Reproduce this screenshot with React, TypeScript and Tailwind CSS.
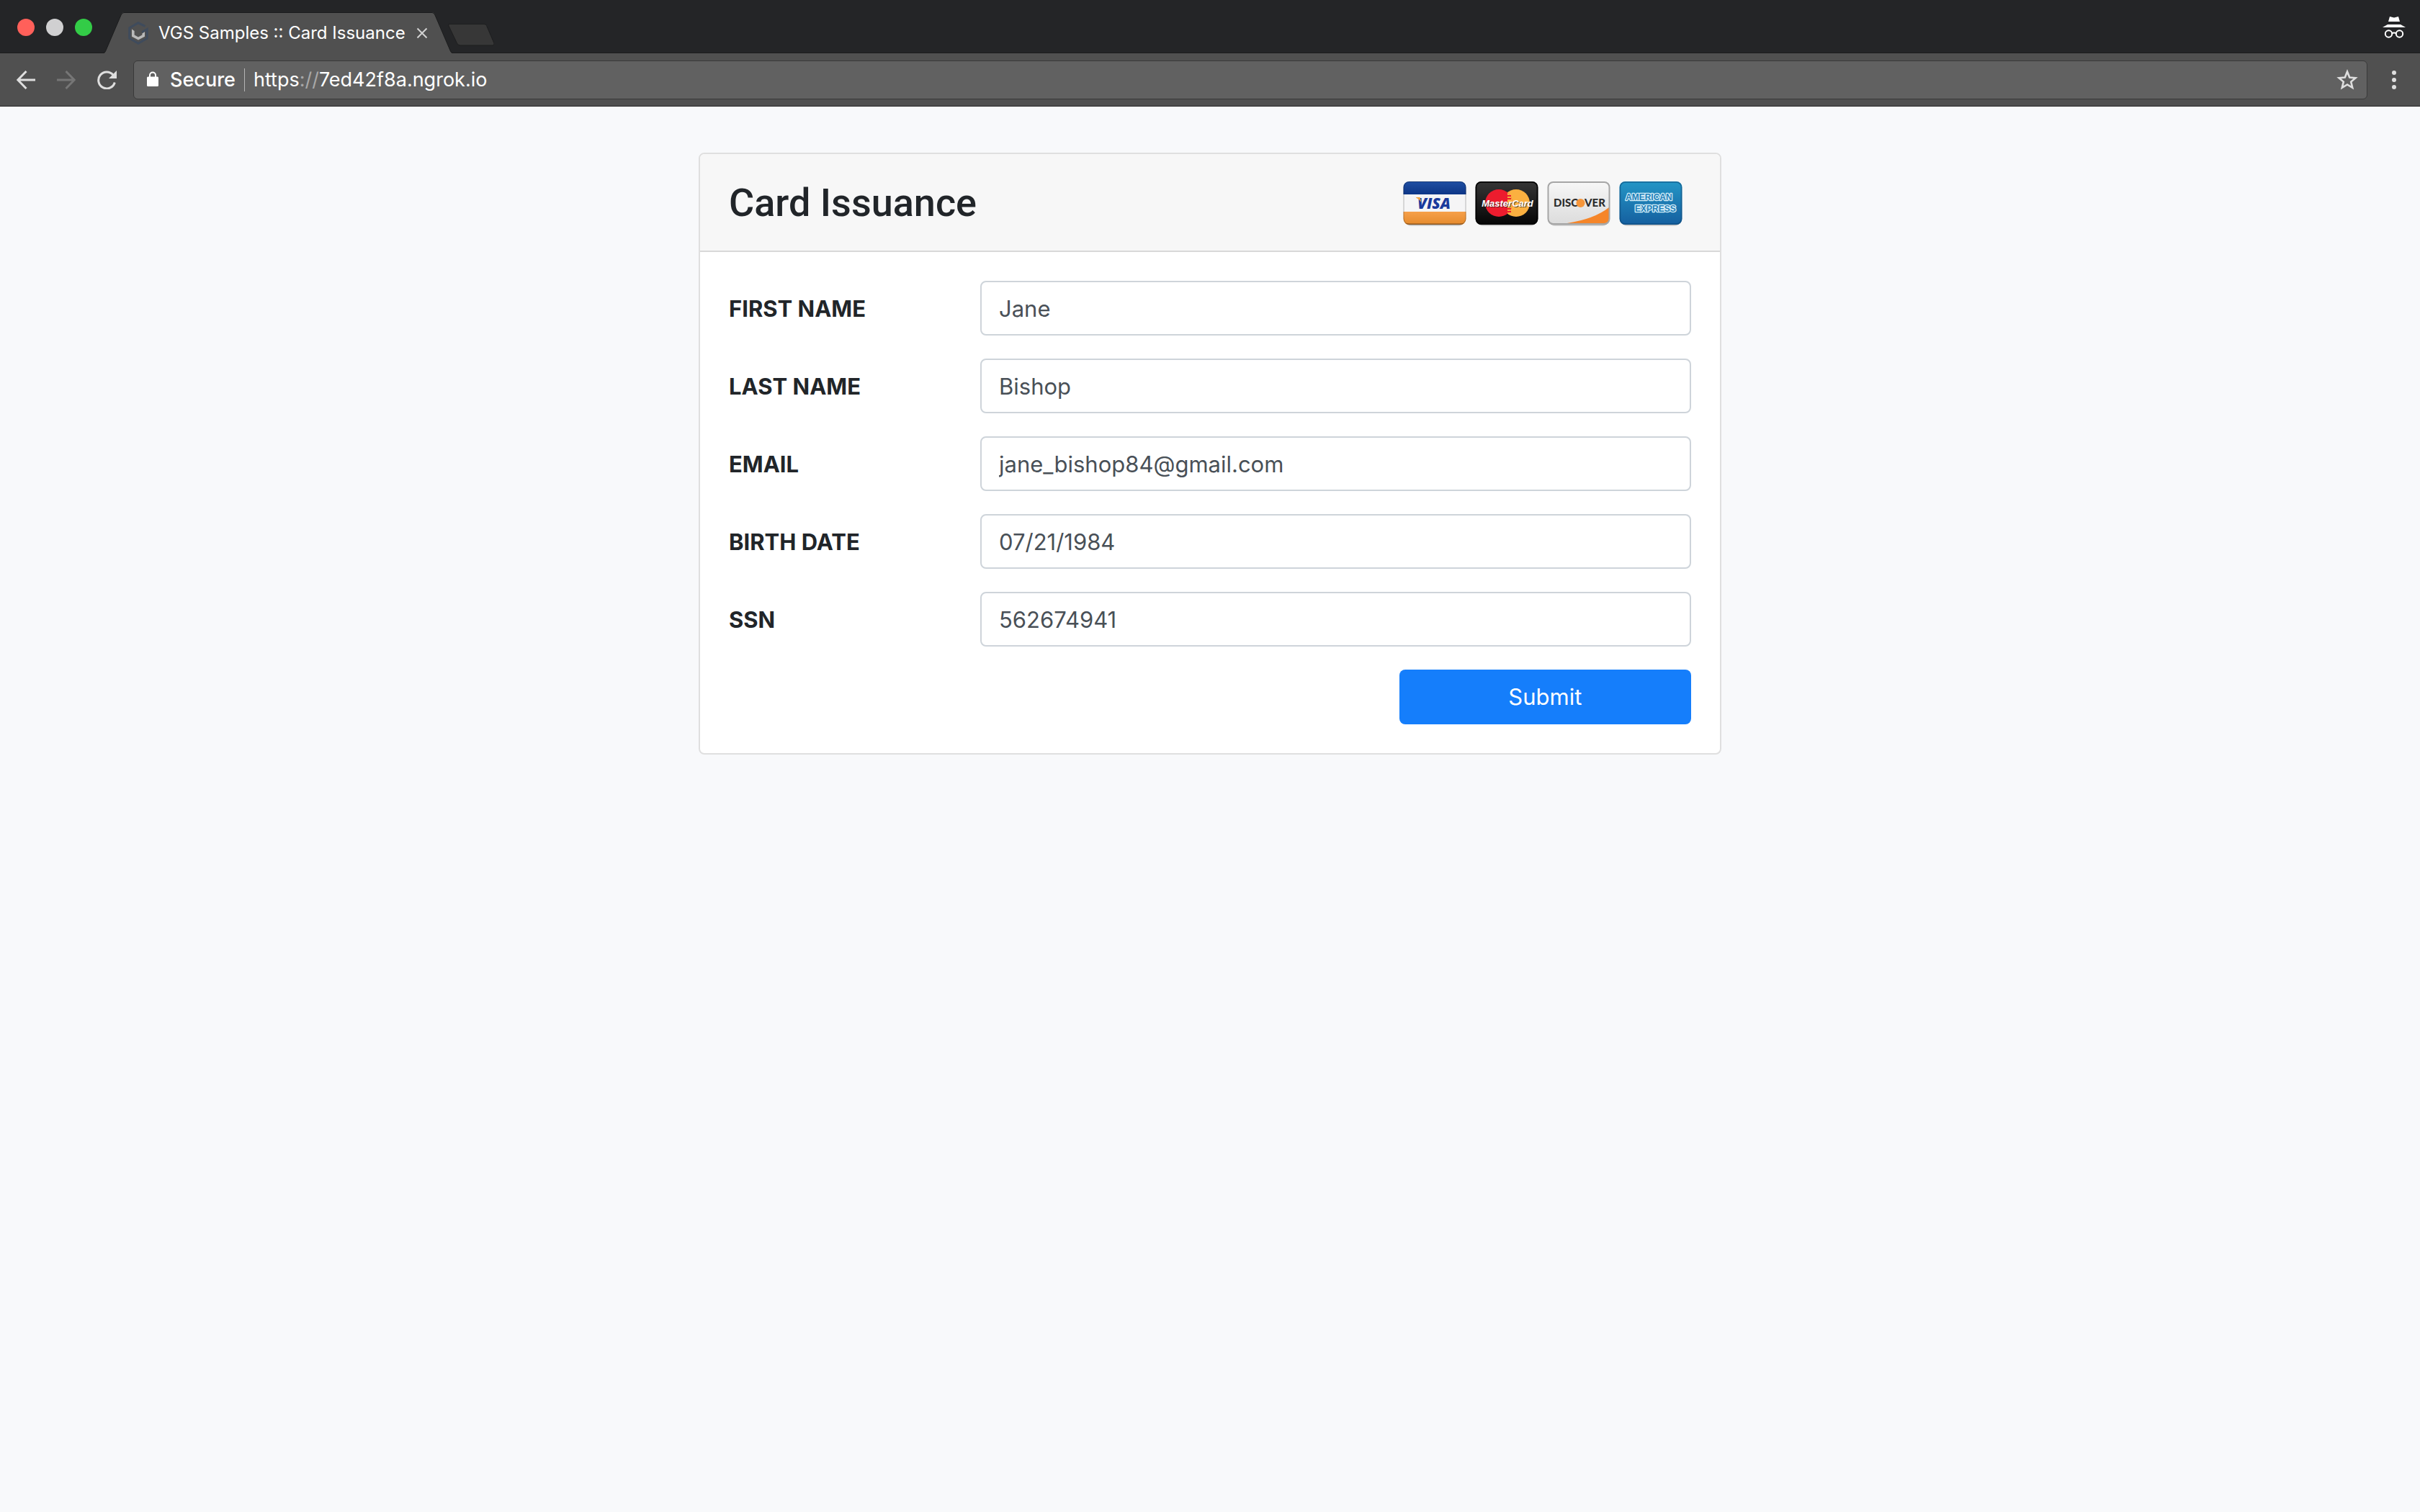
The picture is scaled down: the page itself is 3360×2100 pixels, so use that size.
import { useState } from "react";

const fields = [
  { id: "first-name", label: "FIRST NAME", value: "Jane" },
  { id: "last-name", label: "LAST NAME", value: "Bishop" },
  { id: "email", label: "EMAIL", value: "jane_bishop84@gmail.com" },
  { id: "birth-date", label: "BIRTH DATE", value: "07/21/1984" },
  { id: "ssn", label: "SSN", value: "562674941" },
];

function Favicon() {
  return (
    <svg className="h-8 w-7 shrink-0" viewBox="0 0 28 32" fill="none" aria-hidden="true">
      <path d="M23.5 6.3 L14 1.8 L1.7 8.8 V23.2 L14 30.2 L26.3 23.2 V10.6 L19 14.8" stroke="#3f4b5c" strokeWidth="3" />
      <path d="M5 10.5 L8.6 13 V18.6 L14 21.6 L19.4 18.6 V16.5 L23 14.2 V20.8 L14 25.6 L5 20.8 Z" fill="#b9b9b9" />
    </svg>
  );
}

function CardFrame({ name, children }: { name: string; children: React.ReactNode }) {
  return (
    <svg className="h-16 w-[88px] overflow-visible" viewBox="0 0 88 64" role="img" aria-label={name}>
      <rect x="3" y="8" width="82" height="56" rx="8" fill="#000" opacity="0.12" />
      <rect x="1" y="4" width="86" height="58.5" rx="8" fill="#000" opacity="0.25" />
      {children}
    </svg>
  );
}

function VisaCard() {
  return (
    <CardFrame name="Visa">
      <defs>
        <linearGradient id="visa-blue" x1="0" y1="0" x2="0" y2="1">
          <stop offset="0" stopColor="#1f4fa3" />
          <stop offset="1" stopColor="#0d3687" />
        </linearGradient>
        <linearGradient id="visa-gold" x1="0" y1="0" x2="0" y2="1">
          <stop offset="0" stopColor="#f6a04a" />
          <stop offset="1" stopColor="#e58a2c" />
        </linearGradient>
        <clipPath id="visa-clip">
          <rect x="0.5" y="2" width="87" height="60" rx="8" />
        </clipPath>
      </defs>
      <g clipPath="url(#visa-clip)">
        <rect y="2" width="88" height="60" fill="#f5f5f6" />
        <rect y="2" width="88" height="18" fill="url(#visa-blue)" />
        <rect y="44" width="88" height="18" fill="url(#visa-gold)" />
        <rect y="60" width="88" height="2" fill="#b9722a" />
      </g>
      <rect x="1" y="2.5" width="86" height="59" rx="8" fill="none" stroke="#000" strokeOpacity="0.25" />
      <text x="43" y="39.5" textAnchor="middle" fontFamily="Open Sans, sans-serif" fontWeight="800" fontStyle="italic" fontSize="21" fill="#1a3a9c">VISA</text>
      <path d="M18 24 H23.5 L25.6 31 Q22.5 26.5 18 24.6 Z" fill="#f2a23c" />
    </CardFrame>
  );
}

function MasterCard() {
  return (
    <CardFrame name="MasterCard">
      <defs>
        <linearGradient id="mc-black" x1="0" y1="0" x2="0" y2="1">
          <stop offset="0" stopColor="#363636" />
          <stop offset="1" stopColor="#050505" />
        </linearGradient>
      </defs>
      <rect x="0.5" y="2" width="87" height="60" rx="8" fill="url(#mc-black)" />
      <rect x="1.5" y="3" width="85" height="58" rx="7" fill="none" stroke="#000" strokeWidth="1.5" />
      <circle cx="57" cy="32" r="19" fill="#fbb040" />
      <circle cx="33" cy="32" r="19" fill="#ed1c2e" />
      <path d="M45 17.3 A19 19 0 0 1 45 46.7 Z" fill="#fbb040" />
      <path d="M42 22 H50 M40 26 H50 M42 44 H50 M40 40 H50" stroke="#ed1c2e" strokeWidth="2" />
      <text x="46" y="38" textAnchor="middle" fontFamily="Liberation Sans, sans-serif" fontWeight="700" fontStyle="italic" fontSize="13" fill="#222" opacity="0.7">MasterCard</text>
      <text x="45" y="37" textAnchor="middle" fontFamily="Liberation Sans, sans-serif" fontWeight="700" fontStyle="italic" fontSize="13" fill="#fff">MasterCard</text>
    </CardFrame>
  );
}

function DiscoverCard() {
  return (
    <CardFrame name="Discover">
      <defs>
        <linearGradient id="disc-grey" x1="0" y1="0" x2="0" y2="1">
          <stop offset="0" stopColor="#f7f7f7" />
          <stop offset="1" stopColor="#dcdcdc" />
        </linearGradient>
      </defs>
      <rect x="1.5" y="3" width="85" height="58" rx="7" fill="url(#disc-grey)" />
      <path d="M28 60 Q66 54 86 38 V54 Q86 60 80 60 Z" fill="#f58529" />
      <rect x="1.5" y="3" width="85" height="58" rx="7" fill="none" stroke="#a6a6a6" strokeWidth="2" />
      <text x="9" y="37" fontFamily="Lato, sans-serif" fontWeight="900" fontSize="15" fill="#2b2b2b">DISC</text>
      <circle cx="46.5" cy="32" r="6" fill="#f7963a" />
      <text x="52" y="37" fontFamily="Lato, sans-serif" fontWeight="900" fontSize="15" fill="#2b2b2b">VER</text>
    </CardFrame>
  );
}

function AmexCard() {
  return (
    <CardFrame name="American Express">
      <defs>
        <linearGradient id="amex-blue" x1="0" y1="0" x2="0" y2="1">
          <stop offset="0" stopColor="#2496c6" />
          <stop offset="1" stopColor="#155f9f" />
        </linearGradient>
      </defs>
      <rect x="0.5" y="2" width="87" height="60" rx="8" fill="url(#amex-blue)" />
      <rect x="1.5" y="3" width="85" height="58" rx="7" fill="none" stroke="#0d4a78" strokeOpacity="0.6" strokeWidth="1.5" />
      <g fontFamily="Liberation Sans, sans-serif" fontWeight="700" fontSize="12" fill="#1f7fb8" stroke="#d3edf8" strokeWidth="2.5" paintOrder="stroke" strokeLinejoin="round">
        <text x="9" y="28">AMERICAN</text>
        <text x="22" y="44">EXPRESS</text>
      </g>
    </CardFrame>
  );
}

function TitleBar() {
  return (
    <div className="flex h-[74px] items-end border-b border-[#1b1c1d] bg-[#242527]">
      <div className="flex gap-4 self-start pt-[26px] pl-6">
        <button aria-label="Close window" className="size-6 rounded-full bg-[#ff605a]" />
        <button aria-label="Minimize window" className="size-6 rounded-full bg-[#d0d0d1]" />
        <button aria-label="Zoom window" className="size-6 rounded-full bg-[#33cc47]" />
      </div>
      <div className="-mb-px ml-4 flex h-[57px] items-stretch">
        <svg className="h-full w-7" viewBox="0 0 28 57" aria-hidden="true">
          <path d="M0 57 Q2 56 3 53 L24 4 Q25.5 0 28 0 V57 Z" fill="#505050" />
          <path d="M0 56.5 Q2 56 3 53 L24 4 Q25.5 0.5 28 0.5" fill="none" stroke="#1b1c1d" />
        </svg>
        <div className="flex w-[428px] items-center border-t border-[#1b1c1d] bg-[#505050] pr-1.5 pl-1.5">
          <Favicon />
          <span className="ml-3.5 flex-1 text-[24px] leading-8 whitespace-nowrap text-white">VGS Samples :: Card Issuance</span>
          <button aria-label="Close tab">
            <svg className="size-4" viewBox="0 0 16 16" aria-hidden="true">
              <path d="M1.5 1.5 L14.5 14.5 M14.5 1.5 L1.5 14.5" stroke="#d2d2d2" strokeWidth="2" />
            </svg>
          </button>
        </div>
        <svg className="h-full w-7" viewBox="0 0 28 57" aria-hidden="true">
          <path d="M28 57 Q26 56 25 53 L4 4 Q2.5 0 0 0 V57 Z" fill="#505050" />
          <path d="M28 56.5 Q26 56 25 53 L4 4 Q2.5 0.5 0 0.5" fill="none" stroke="#1b1c1d" />
        </svg>
      </div>
      <button aria-label="New tab" className="mb-[9px] -ml-1.5">
        <svg className="h-[31px] w-16" viewBox="0 0 64 31" aria-hidden="true">
          <path d="M2 0.5 H50 Q52.5 0.5 53.5 2.5 L64 27 Q64.5 30 62 30 H17 Q14 30 12.5 27 L1 3 Q0 0.5 2 0.5 Z" fill="#373737" stroke="#1d1e1f" />
        </svg>
      </button>
      <svg className="mr-5 mb-5 ml-auto h-[30px] w-8" viewBox="0 0 32 30" aria-label="Incognito" role="img">
        <path d="M10 0 L16 1.5 L22 0 L24 7 H8 Z M7 11 H25 L32 15 H0 Z" fill="#fff" />
        <g fill="none" stroke="#fff" strokeWidth="2">
          <circle cx="8.5" cy="24" r="4.7" />
          <circle cx="23.5" cy="24" r="4.7" />
          <path d="M13 23.5 Q16 21.5 19 23.5" />
        </g>
      </svg>
    </div>
  );
}

function Toolbar() {
  const [address, setAddress] = useState("https://7ed42f8a.ngrok.io");
  const [scheme, rest] = address.includes("://") ? address.split("://") : ["", address];
  return (
    <div className="flex h-[74px] items-center border-b border-[#242424] bg-[#505050]">
      <button aria-label="Back" className="ml-[23px]">
        <svg className="h-[26px] w-[26px]" viewBox="0 0 26 26" fill="none" stroke="#dedede" strokeWidth="3" aria-hidden="true">
          <path d="M26 13 H2 M13.5 1 L1.8 13 L13.5 25" />
        </svg>
      </button>
      <button aria-label="Forward" className="ml-[30px]">
        <svg className="h-[26px] w-[26px]" viewBox="0 0 26 26" fill="none" stroke="#767676" strokeWidth="3" aria-hidden="true">
          <path d="M0 13 H24 M12.5 1 L24.2 13 L12.5 25" />
        </svg>
      </button>
      <button aria-label="Reload" className="ml-[30px]">
        <svg className="h-[26px] w-[27px]" viewBox="0 0 27 26" aria-hidden="true">
          <path d="M22 6 A11.5 11.5 0 1 0 24.3 16.5" fill="none" stroke="#dedede" strokeWidth="3" />
          <path d="M27 0 V11 H16 Z" fill="#dedede" />
        </svg>
      </button>
      <div className="ml-[23px] flex h-[54px] flex-1 items-center rounded-md border border-[#393939] bg-[#616161] pl-[18px] text-[27px] leading-9 text-white">
        <svg className="mb-0.5 h-[21px] w-4" viewBox="0 0 16 21" aria-hidden="true">
          <path d="M4 8 V5.5 A4 4 0 0 1 12 5.5 V8" fill="none" stroke="#fff" strokeWidth="2" />
          <rect y="7.5" width="16" height="13.5" rx="1.5" fill="#fff" />
        </svg>
        <span className="ml-4 font-medium">Secure</span>
        <span className="mx-3 h-8 w-px bg-[#b5b5b5]" />
        <div className="relative flex-1">
          <span aria-hidden="true">
            {scheme}
            {scheme && <span className="text-[#a8a8a8]">://</span>}
            {rest}
          </span>
          <input
            aria-label="Address"
            value={address}
            onChange={(e) => setAddress(e.target.value)}
            className="absolute inset-0 w-full bg-transparent text-transparent caret-white outline-none"
          />
        </div>
        <button aria-label="Bookmark this page" className="mr-3">
          <svg className="h-[29px] w-[30px]" viewBox="0 0 30 29" aria-hidden="true">
            <path d="M15 3.5 L18.2 11.5 L26.5 12.2 L20.2 17.6 L22.2 25.8 L15 21.4 L7.8 25.8 L9.8 17.6 L3.5 12.2 L11.8 11.5 Z" fill="none" stroke="#dedede" strokeWidth="2.6" />
          </svg>
        </button>
      </div>
      <button aria-label="Menu" className="mr-[33px] ml-[34px]">
        <svg className="h-[26px] w-1.5" viewBox="0 0 6 26" fill="#dedede" aria-hidden="true">
          <circle cx="3" cy="3" r="3" />
          <circle cx="3" cy="13" r="3" />
          <circle cx="3" cy="23" r="3" />
        </svg>
      </button>
    </div>
  );
}

function IssuanceForm() {
  return (
    <form
      onSubmit={(e) => e.preventDefault()}
      className="mx-auto w-full max-w-[1420px] rounded-lg border-2 border-[#dfdfdf] bg-white text-[#212529]"
    >
      <header className="flex items-center justify-between rounded-t-md border-b-2 border-[#d8d8d8] bg-[#f7f7f7] pt-[34px] pr-[52px] pb-8 pl-10">
        <h1 className="font-['Roboto','Inter',sans-serif] text-[54px] leading-[68px] font-medium">Card Issuance</h1>
        <div className="flex gap-3">
          <VisaCard />
          <MasterCard />
          <DiscoverCard />
          <AmexCard />
        </div>
      </header>
      <div className="flex flex-col gap-8 p-10">
        {fields.map((f) => (
          <div key={f.id} className="grid grid-cols-12 items-center gap-x-[60px]">
            <label htmlFor={f.id} className="col-span-3 pt-0.5 text-[31px] leading-[48px] font-bold whitespace-nowrap">
              {f.label}
            </label>
            <input
              id={f.id}
              type="text"
              defaultValue={f.value}
              className="col-span-9 h-[76px] rounded-lg border-2 border-[#ced4da] bg-white px-6 text-[31px] text-[#495057] outline-none"
            />
          </div>
        ))}
        <div className="grid grid-cols-12 gap-x-[60px]">
          <button type="submit" className="col-span-4 col-start-9 h-[76px] rounded-lg bg-[#157efb] text-[31px] text-white">
            Submit
          </button>
        </div>
      </div>
    </form>
  );
}

export default function App() {
  return (
    <div className="min-h-screen bg-[#f8f9fb] font-['Inter','Liberation_Sans',sans-serif]">
      <TitleBar />
      <Toolbar />
      <main className="px-8 py-16">
        <IssuanceForm />
      </main>
    </div>
  );
}
